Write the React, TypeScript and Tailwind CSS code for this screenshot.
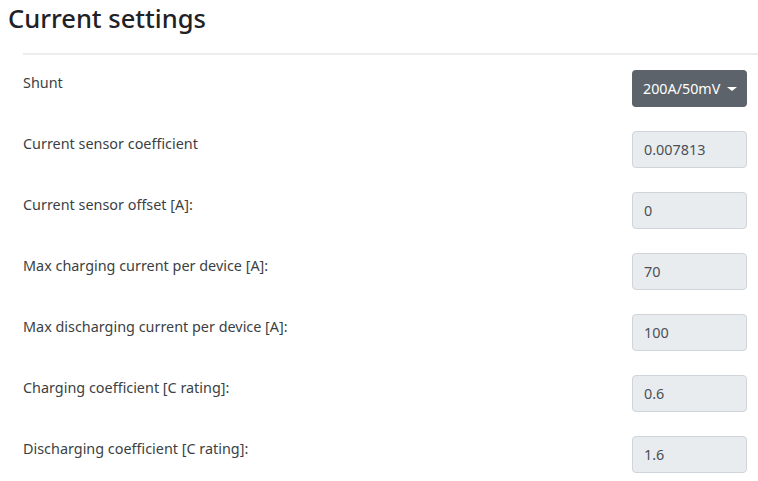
import React from "react";

const fields = [
  { label: "Current sensor coefficient", value: "0.007813" },
  { label: "Current sensor offset [A]:", value: "0" },
  { label: "Max charging current per device [A]:", value: "70" },
  { label: "Max discharging current per device [A]:", value: "100" },
  { label: "Charging coefficient [C rating]:", value: "0.6" },
  { label: "Discharging coefficient [C rating]:", value: "1.6" },
];

export default function App() {
  return (
    <div className="w-[758px] h-[481px] bg-white overflow-hidden font-['Noto_Sans',sans-serif]">
      <h1 className="pl-[8px] pt-[1px] text-[25.5px] leading-[34px] font-medium text-[#1e2125]">Current settings</h1>
      <div className="ml-[23px] mt-[18px] h-[2px] bg-[#ececec]" />
      <div className="pl-[23px] pr-[11px] pt-[15px] flex flex-col gap-[24px]">
        <div className="flex items-start justify-between">
          <span className="mt-[3px] text-[14.4px] leading-5 text-[#3b3f44]">Shunt</span>
          <button className="h-[37px] w-[115px] rounded-[4px] bg-[#5c636a] text-white text-[14.3px] flex items-center pl-[11px] gap-[7px]">
            200A/50mV
            <span className="w-0 h-0 border-l-[5px] border-r-[5px] border-t-[4px] border-l-transparent border-r-transparent border-t-white" />
          </button>
        </div>
        {fields.map((f) => (
          <div key={f.label} className="flex items-start justify-between">
            <span className="mt-[3px] text-[14.4px] leading-5 text-[#3b3f44]">{f.label}</span>
            <div className="h-[37px] w-[115px] rounded-[4px] bg-[#e9ecef] border border-[#ced4da] pl-[11px] flex items-center text-[14.4px] text-[#495057]">
              {f.value}
            </div>
          </div>
        ))}
      </div>
    </div>
  );
}
